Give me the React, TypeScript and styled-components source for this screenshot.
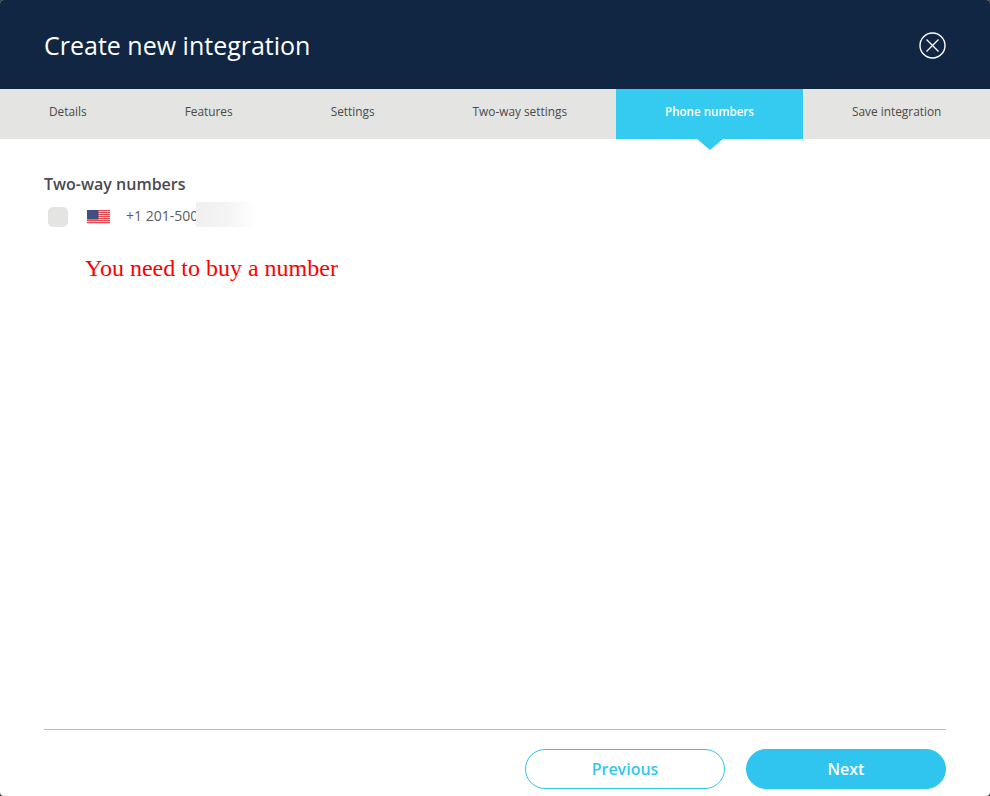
import React from 'react';
import styled, { createGlobalStyle } from 'styled-components';

const GlobalStyle = createGlobalStyle`
  html, body {
    margin: 0;
    padding: 0;
    background: #3a3a3a;
  }
  * {
    box-sizing: border-box;
  }
`;

const Modal = styled.div`
  width: 990px;
  height: 796px;
  display: flex;
  flex-direction: column;
  background: #ffffff;
  border-radius: 4px;
  overflow: hidden;
  font-family: "Open Sans", sans-serif;
`;

const Header = styled.header`
  height: 89px;
  flex: none;
  display: flex;
  align-items: center;
  justify-content: space-between;
  padding: 0 44px;
  background: #112642;

  h1 {
    margin: 0;
    font-size: 25px;
    font-weight: 400;
    color: #ffffff;
  }
`;

const CloseButton = styled.button`
  width: 27px;
  height: 27px;
  margin-top: 2px;
  padding: 0;
  border: none;
  background: none;
  display: block;
  cursor: pointer;

  svg {
    display: block;
  }
`;

const Tabs = styled.nav`
  height: 50px;
  flex: none;
  display: flex;
  background: #e4e4e2;
`;

const Tab = styled.div<{ $active?: boolean }>`
  position: relative;
  flex: 1 1 auto;
  display: flex;
  align-items: center;
  justify-content: center;
  padding: 0 49px 6px;
  font-size: ${props => (props.$active ? '11.6px' : '11.85px')};
  white-space: nowrap;
  font-weight: ${props => (props.$active ? 600 : 400)};
  color: ${props => (props.$active ? '#ffffff' : '#4a4a4a')};
  background: ${props => (props.$active ? '#35cbf0' : 'transparent')};

  ${props =>
    props.$active &&
    `
    &::after {
      content: '';
      position: absolute;
      left: 50%;
      top: 100%;
      margin-left: -13px;
      border-left: 13px solid transparent;
      border-right: 13px solid transparent;
      border-top: 11px solid #35cbf0;
    }
  `}
`;

const Content = styled.main`
  flex: 1;
  padding: 35px 44px 0;
`;

const SectionTitle = styled.h2`
  margin: 0;
  font-size: 16px;
  line-height: 20px;
  font-weight: 600;
  color: #4a4a50;
`;

const NumberRow = styled.div`
  height: 26px;
  margin-top: 10px;
  padding-left: 4px;
  display: flex;
  align-items: center;
`;

const Checkbox = styled.span`
  width: 20px;
  height: 20px;
  flex: none;
  border-radius: 5px;
  background: #e4e4e2;
`;

const Flag = styled.svg`
  width: 23px;
  height: 14px;
  flex: none;
  margin-left: 19px;
`;

const PhoneNumber = styled.span`
  position: relative;
  width: 130px;
  margin: 0 0 2px 16px;
  font-size: 14px;
  line-height: 18px;
  color: #5c5c62;
`;

const Redacted = styled.span`
  position: absolute;
  left: 70px;
  top: -5px;
  width: 60px;
  height: 25px;
  background: linear-gradient(to right, #f0f0f0 0%, #f4f4f4 50%, #ffffff 100%);
`;

const Notice = styled.p`
  margin: 24px 0 0 41px;
  font-family: "Liberation Serif", serif;
  font-size: 24px;
  line-height: 28px;
  color: #ff0000;
`;

const Footer = styled.footer`
  flex: none;
  margin: 0 44px;
  height: 67px;
  padding-top: 19px;
  border-top: 1px solid #bdbdbd;
  display: flex;
  justify-content: flex-end;
  gap: 21px;
`;

const Button = styled.button<{ $primary?: boolean }>`
  width: 200px;
  height: 40px;
  border-radius: 20px;
  border: 1px solid #2fc5ee;
  font-family: "Open Sans", sans-serif;
  font-size: 16px;
  font-weight: 600;
  cursor: pointer;
  color: ${props => (props.$primary ? '#ffffff' : '#35c8ef')};
  background: ${props => (props.$primary ? '#2fc5ee' : '#ffffff')};
`;

const steps = ['Details', 'Features', 'Settings', 'Two-way settings', 'Phone numbers', 'Save integration'];
const activeStep = 'Phone numbers';

const UsFlag = () => (
  <Flag viewBox="0 0 23 14">
    <rect width="23" height="14" fill="#fbe4e4" />
    {[0, 2, 4, 6, 8, 10, 12].map(y => (
      <rect key={y} y={y} width="23" height="1.2" fill="#ea4a52" />
    ))}
    <rect width="11.5" height="9.5" fill="#414f82" />
  </Flag>
);

const App: React.FC = () => {
  return (
    <>
      <GlobalStyle />
      <Modal>
        <Header>
          <h1>Create new integration</h1>
          <CloseButton aria-label="Close">
            <svg width="27" height="27" viewBox="0 0 27 27" fill="none" stroke="#ffffff">
              <circle cx="13.5" cy="13.5" r="12.5" strokeWidth="1.4" />
              <path d="M7.5 7.5l12 12M19.5 7.5l-12 12" strokeWidth="1.3" />
            </svg>
          </CloseButton>
        </Header>
        <Tabs>
          {steps.map(step => (
            <Tab key={step} $active={step === activeStep}>
              {step}
            </Tab>
          ))}
        </Tabs>
        <Content>
          <SectionTitle>Two-way numbers</SectionTitle>
          <NumberRow>
            <Checkbox />
            <UsFlag />
            <PhoneNumber>
              +1 201-500
              <Redacted />
            </PhoneNumber>
          </NumberRow>
          <Notice>You need to buy a number</Notice>
        </Content>
        <Footer>
          <Button>Previous</Button>
          <Button $primary>Next</Button>
        </Footer>
      </Modal>
    </>
  );
};

export default App;
